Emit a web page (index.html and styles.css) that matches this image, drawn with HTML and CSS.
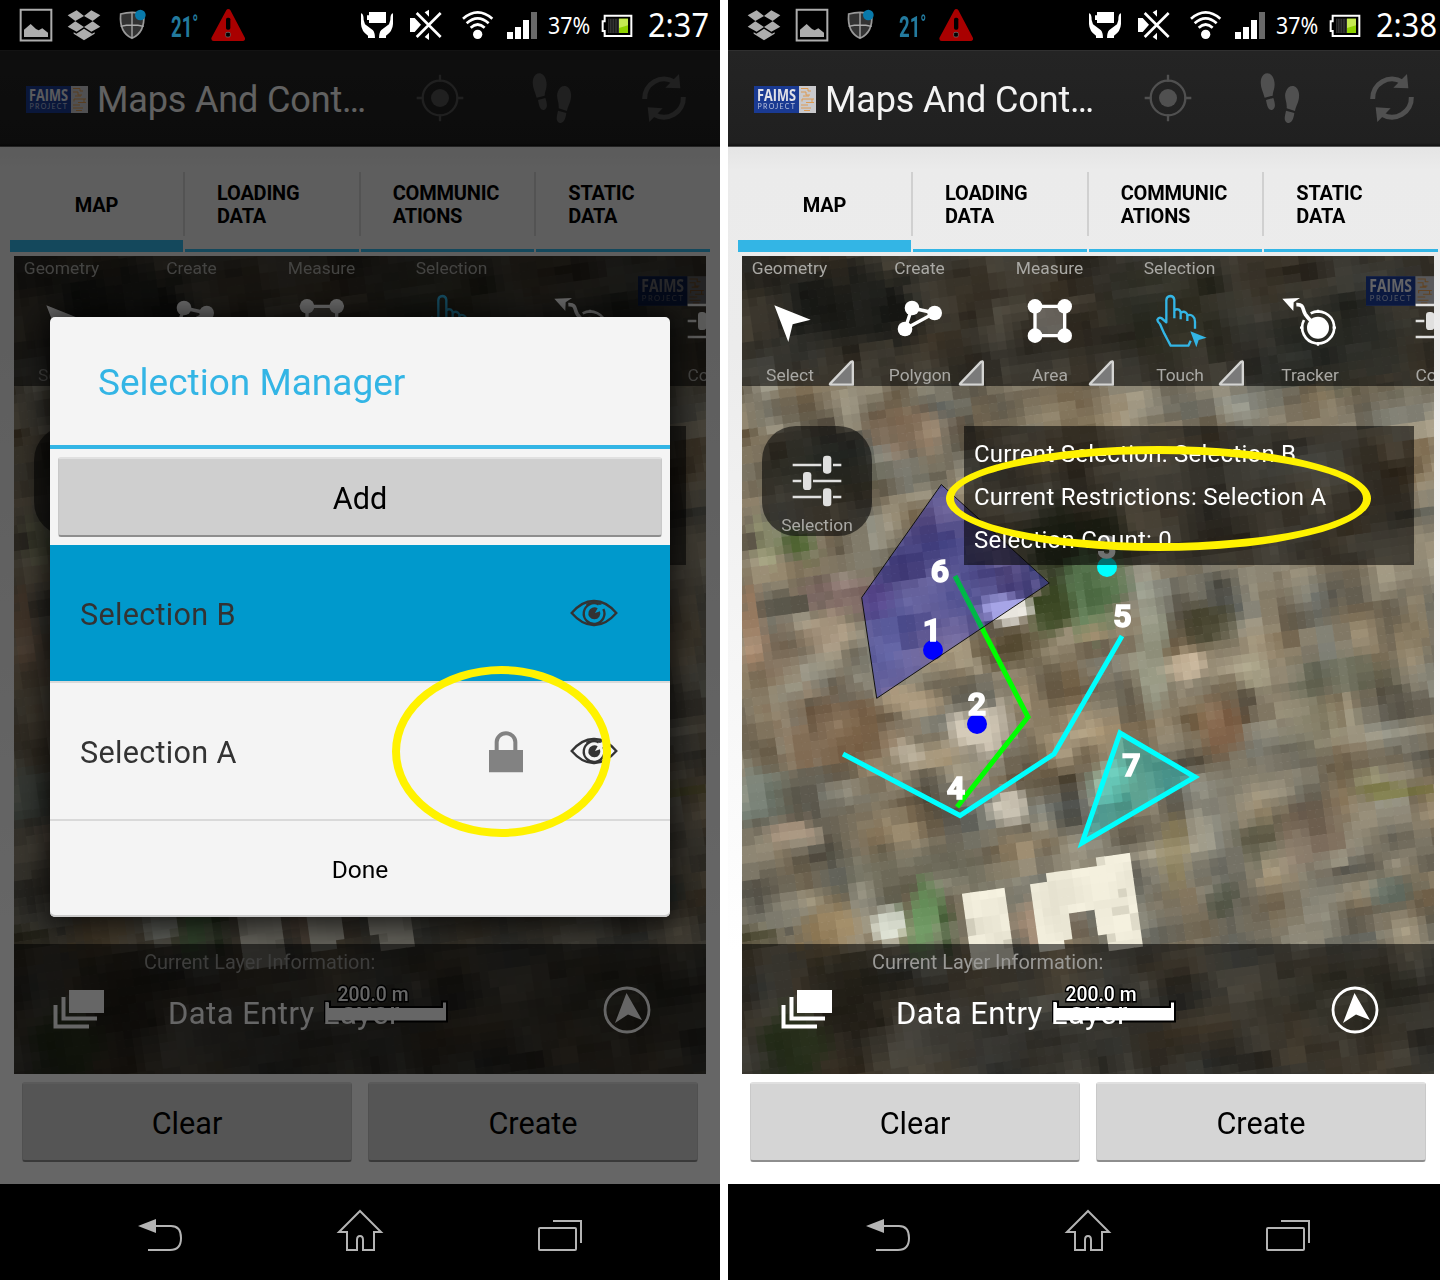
FILE: index.html
```html
<!DOCTYPE html>
<html lang="en">
<head>
<meta charset="utf-8">
<title>Maps And Controls</title>
<link rel="stylesheet" href="styles.css">
</head>
<body>

<svg class="sprite" aria-hidden="true">
  <symbol id="i-image" viewBox="57 24 102 102">
    <path d="M62 29.500H154V121.500H62Z" fill="none" stroke="#adadad" stroke-width="6"/>
    <path d="M72 111V89L92 72 108 87 116 91 127 85 144 98V111Z" fill="#adadad"/>
  </symbol>
  <symbol id="i-dropbox" viewBox="201 24 102 102">
    <path d="M203 46 230 31 252 48 226 63ZM301 46 274 31 252 48 278 63ZM203 80 226 64 252 81 230 95ZM301 80 278 64 252 81 274 95ZM252 86 276 101 284 97V101L252 121 221 101V97L229 101Z" fill="#adadad"/>
  </symbol>
  <symbol id="i-shield" viewBox="351 24 102 102">
    <path d="M362 42Q397 32 431 42Q436 97 396 115Q357 97 362 42Z" fill="#333" stroke="#999" stroke-width="5"/>
    <path d="M396 38V114M362 79Q396 71 431 79" stroke="#aaa" stroke-width="4" fill="none"/>
    <circle cx="421" cy="45" r="16" fill="#0879aa"/>
  </symbol>
  <symbol id="i-warning" viewBox="633 24 102 102">
    <path d="M685 34 728 116H641Z" fill="#a90000" stroke="#a90000" stroke-width="14" stroke-linejoin="round"/>
    <rect x="678" y="53" width="13" height="36" rx="5"/><rect x="677" y="97" width="14" height="14" rx="4" stroke="#777" stroke-width="2"/>
  </symbol>
  <symbol id="i-hands" viewBox="57 24 108 102">
    <path d="M87 36H138V69H87V60H81V46H87Z" fill="#fff"/>
    <path d="M63 40Q71 40 71 60L75 73 98 90Q105 97 105 114H84V107Q64 94 63 72ZM159 40Q151 40 151 60L147 73 124 90Q117 97 117 114H138V107Q158 94 159 72Z" fill="#fff"/>
  </symbol>
  <symbol id="i-mute" viewBox="204 24 108 102">
    <path d="M210 54H224L243 74 224 96H210ZM254 37 267 29V50ZM254 111 267 120V98Z" fill="#fff"/>
    <path d="M230 39 302 111M302 39 230 111" stroke="#fff" stroke-width="8"/>
  </symbol>
  <symbol id="i-wifi" viewBox="363 24 102 102">
    <circle cx="413" cy="103" r="14" fill="#fff"/>
    <path d="M369 56Q413 18 457 56M380 70Q413 40 446 70M392 83Q413 64 434 83" stroke="#fff" stroke-width="8" fill="none"/>
  </symbol>
  <symbol id="i-signal" viewBox="498 24 96 102">
    <path d="M501 96H519V117H501ZM525 81H543V117H525ZM549 60H567V117H549Z" fill="#fff"/><path d="M573 36H591V117H573Z" fill="#696969"/>
  </symbol>
  <symbol id="i-battery" viewBox="783 24 96 102">
    <path d="M794 47H874V108H794V93H788V64H794Z" fill="none" stroke="#fff" stroke-width="6"/>
    <path d="M804 56H837V99H804Z" fill="#333"/><path d="M808 57V98M816 57V98M824 57V98M832 57V98" stroke="#151515" stroke-width="3"/>
    <path d="M837 56H864V99H837Z" fill="#8fd200"/><path d="M837 56H864V76L837 84Z" fill="#c5ea52"/>
  </symbol>
  <symbol id="i-logo" viewBox="0 0 62 27">
    <rect width="62" height="27" fill="#c9c9cc"/>
    <rect width="45" height="27" fill="#1a3a92"/>
    <text x="3" y="14.800" class="logo-name" textLength="39" lengthAdjust="spacingAndGlyphs">FAIMS</text>
    <text x="3.500" y="22.800" class="logo-sub" textLength="37.500">PROJECT</text>
    <path d="M47 2.500H54V5H57M47 6H52V9H56M49 10H55M60 13H48V15.500M60 16.500H52M47 19H54M47 22H57M50 24.500H56M58 13V17" fill="none" stroke="#dc9a52" stroke-width="1"/>
  </symbol>
  <symbol id="i-locate" viewBox="225 219 150 150">
    <circle cx="300" cy="294" r="27" fill="currentColor"/>
    <circle cx="300" cy="294" r="52" fill="none" stroke="currentColor" stroke-width="7"/>
    <path d="M300 224V245M300 343V364M230 294H251M349 294H370" stroke="currentColor" stroke-width="7"/>
  </symbol>
  <symbol id="i-steps" viewBox="561 219 150 150">
    <path d="M590 293C584 272 574 256 580 235C587 213 612 214 618 240C624 262 614 274 614 287ZM594 300 616 294C622 312 624 325 612 330C600 331 597 316 594 300ZM656 325C658 303 646 292 654 274C662 251 690 252 693 282C695 304 684 316 681 333ZM654 332 679 339C677 357 671 370 659 369C645 364 651 347 654 332Z" fill="currentColor"/>
  </symbol>
  <symbol id="i-sync" viewBox="897 219 150 150">
    <path d="M914 297A58 58 0 0 1 1003 246M1030 291A58 58 0 0 1 942 343" fill="none" stroke="currentColor" stroke-width="15"/>
    <path d="M1017 222 1021 265 976 263ZM928 366 923 322 968 325Z" fill="currentColor"/>
  </symbol>
  <symbol id="i-select" viewBox="96 423 180 180">
    <path d="M139 466 248 509 194 523 181 576Z" fill="#fff"/>
  </symbol>
  <symbol id="i-polygon" viewBox="486 423 180 180">
    <path d="M552 474 620 489 531 537Z" fill="none" stroke="#fff" stroke-width="10"/>
    <g fill="#fff"><circle cx="552" cy="474" r="22"/><circle cx="620" cy="489" r="22"/><circle cx="531" cy="537" r="22"/></g>
  </symbol>
  <symbol id="i-area" viewBox="876 423 180 180">
    <path d="M921 469H1010V557H921Z" fill="rgba(255,255,255,.25)" stroke="#fff" stroke-width="10"/>
    <g fill="#fff"><circle cx="921" cy="469" r="22"/><circle cx="1010" cy="469" r="22"/><circle cx="921" cy="557" r="22"/><circle cx="1010" cy="557" r="22"/></g>
  </symbol>
  <symbol id="i-touch" viewBox="210 423 180 180">
    <path d="M283 505V449Q281 438 271 438Q260 439 259 450V517L244 504Q236 501 232 509Q232 514 240 522Q245 534 253 551L263 570 272 587H325L332 572M283 482Q288 475 297 479Q303 483 302 491V508M302 490Q309 482 318 488Q323 492 322 499V513M322 498Q330 491 339 499Q345 504 345 515V536" fill="none" stroke="#33b5e5" stroke-width="7" stroke-linejoin="round"/>
    <path d="M331 544 380 563 356 570 349 592Z" fill="#33b5e5"/>
  </symbol>
  <symbol id="i-tracker" viewBox="600 423 180 180">
    <path d="M607 446 660 444 641 457 640 483Z" fill="#fff"/>
    <path d="M649 464C674 462 666 478 676 493Q683 503 696 516" fill="none" stroke="#fff" stroke-width="11"/>
    <circle cx="714" cy="533" r="33" fill="#fff"/>
    <path d="M692 490A48 48 0 1 1 672 510" fill="none" stroke="#fff" stroke-width="8"/>
    <path d="M714 479V489M714 576V587M660 533H670M758 533H768" stroke="#fff" stroke-width="7"/>
  </symbol>
  <symbol id="i-sliders" viewBox="141 153 180 180">
    <path d="M158 195H244M279 195H304M158 243H184M219 243H304M158 291H244M279 291H304" stroke="#e0e0df" stroke-width="7"/>
    <g fill="#e0e0df"><rect x="249" y="167" width="25" height="54" rx="10"/><rect x="189" y="216" width="25" height="54" rx="10"/><rect x="249" y="265" width="25" height="54" rx="10"/></g>
  </symbol>
  <symbol id="i-corner" viewBox="300 624 80 84">
    <path d="M374 633V701H307Q304 701 306 698L369 632Q374 629 374 634Z" fill="#7a7a7a" stroke="#d4d4d2" stroke-width="7" stroke-linejoin="round"/>
  </symbol>
  <symbol id="i-layers" viewBox="0 0 52 40">
    <path d="M16 1H51V24H16Z" fill="#fff"/><path d="M10.500 8V29.500H44M2.500 16V37.500H36" fill="none" stroke="#fff" stroke-width="4"/>
  </symbol>
  <symbol id="i-compass" viewBox="0 0 48 48">
    <circle cx="24" cy="24" r="22" fill="none" stroke="#fff" stroke-width="2.800"/>
    <path d="M23.500 7 39 34 25 28.500 12 37Z" fill="#fff"/>
  </symbol>
  <symbol id="i-back" viewBox="0 0 48 48">
    <path d="M2 17 20 10V24Z" fill="#b4b4b4"/><path d="M20 17H35Q45 17 45 29Q45 41 34 41H12" fill="none" stroke="#b4b4b4" stroke-width="2"/>
  </symbol>
  <symbol id="i-home" viewBox="0 0 48 48">
    <path d="M24 2 45 23H38V41H27V31Q27 27 24 27Q21 27 21 31V41H11V23H3Z" fill="none" stroke="#b4b4b4" stroke-width="2"/>
  </symbol>
  <symbol id="i-recents" viewBox="0 0 48 48">
    <rect x="3" y="19" width="37" height="22" rx="1" fill="none" stroke="#b4b4b4" stroke-width="2"/><path d="M17 12H45V34" fill="none" stroke="#b4b4b4" stroke-width="2"/>
  </symbol>
  <symbol id="i-eye" viewBox="570 177 144 84">
    <path d="M575 219Q607 182 642 183Q677 182 709 219Q677 256 642 255Q607 256 575 219Z" fill="none" stroke="#333" stroke-width="7"/>
    <path d="M617 191Q642 181 668 191L660 195Q642 185 622 197ZM617 247Q642 259 668 247Q642 251 617 247Z" fill="#333"/>
    <path d="M656 193A31 31 0 1 0 670 207" fill="none" stroke="#333" stroke-width="7"/>
    <path d="M653 205A18 18 0 1 0 660 214L645 219Z" fill="#333"/>
  </symbol>
  <symbol id="i-lock" viewBox="324 567 108 129">
    <path d="M327 627H429V694H327Z" fill="#828282"/><path d="M350 628V603A28 26 0 0 1 406 603V628" fill="none" stroke="#828282" stroke-width="12"/>
  </symbol>
</svg>

<template id="app">
  <header class="action-bar">
    <svg class="app-logo"><use href="#i-logo"/></svg>
    <h1 class="app-title">Maps And Cont…</h1>
    <svg class="action"><use href="#i-locate"/></svg>
    <svg class="action"><use href="#i-steps"/></svg>
    <svg class="action"><use href="#i-sync"/></svg>
  </header>
  <nav class="tabs">
    <div class="tab tab-active"><span>MAP</span></div>
    <div class="tab"><span>LOADING<br>DATA</span></div>
    <div class="tab"><span>COMMUNIC<br>ATIONS</span></div>
    <div class="tab"><span>STATIC<br>DATA</span></div>
  </nav>
  <section class="map">
    <canvas class="imagery" width="692" height="818"></canvas>
    <svg class="shapes" viewBox="742 256 692 818">
      <path d="M955 576 1028 717 957 807" class="line line-green"/>
      <path d="M843 754 960 815.500 1054 754 1122 636" class="line line-cyan"/>
      <path d="M1120 733 1195 777 1082 843Z" class="line line-cyan area"/>
      <circle cx="933" cy="650" r="10" fill="#00f"/><circle cx="977" cy="724" r="10" fill="#00f"/><circle cx="1107" cy="567" r="10" fill="#0ff"/>
      <path d="M941.300 484.500 1049.300 583 876.700 698.300 861.700 597.500Z" class="region"/>
      <g class="marks">
        <text x="940" y="582">6</text><text x="932" y="641">1</text><text x="977" y="715">2</text><text x="1107" y="558">3</text>
        <text x="956" y="799">4</text><text x="1122.500" y="627">5</text><text x="1131.500" y="776">7</text>
      </g>
    </svg>
    <svg class="watermark"><use href="#i-logo"/></svg>
    <div class="toolbar">
      <div class="tool"><span class="group">Geometry</span><svg class="tool-icon"><use href="#i-select"/></svg><span class="name">Select</span><svg class="corner"><use href="#i-corner"/></svg></div>
      <div class="tool"><span class="group">Create</span><svg class="tool-icon"><use href="#i-polygon"/></svg><span class="name">Polygon</span><svg class="corner"><use href="#i-corner"/></svg></div>
      <div class="tool"><span class="group">Measure</span><svg class="tool-icon"><use href="#i-area"/></svg><span class="name">Area</span><svg class="corner"><use href="#i-corner"/></svg></div>
      <div class="tool"><span class="group">Selection</span><svg class="tool-icon"><use href="#i-touch"/></svg><span class="name">Touch</span><svg class="corner"><use href="#i-corner"/></svg></div>
      <div class="tool"><span class="group"></span><svg class="tool-icon"><use href="#i-tracker"/></svg><span class="name">Tracker</span></div>
      <div class="tool"><span class="group"></span><svg class="tool-icon"><use href="#i-sliders"/></svg><span class="name">Config</span></div>
    </div>
    <div class="map-middle">
      <div class="side-button"><svg class="tool-icon"><use href="#i-sliders"/></svg><span>Selection</span></div>
      <div class="info"><p>Current Selection: Selection B</p><p>Current Restrictions: Selection A</p><p>Selection Count: 0</p></div>
    </div>
    <div class="layer-bar">
      <svg class="layers"><use href="#i-layers"/></svg>
      <div class="layer-text"><p class="layer-caption">Current Layer Information:</p><p class="layer-name">Data Entry Layer</p></div>
      <svg class="compass"><use href="#i-compass"/></svg>
    </div>
    <svg class="scale" viewBox="0 0 126 40">
      <path d="M2 17.500H7V23H119V17.500H124V37.500H2Z" fill="#fff" stroke="#000" stroke-width="2"/>
      <text x="50" y="17" textLength="71" lengthAdjust="spacingAndGlyphs">200.0 m</text>
    </svg>
  </section>
  <div class="buttons"><button class="btn">Clear</button><button class="btn">Create</button></div>
</template>

<main class="screens">
  <section class="phone">
    <div class="status">
      <svg class="note"><use href="#i-image"/></svg><svg class="note"><use href="#i-dropbox"/></svg><svg class="note"><use href="#i-shield"/></svg>
      <span class="temp">21<sup>°</sup></span><svg class="note"><use href="#i-warning"/></svg>
      <div class="system">
        <svg class="w36"><use href="#i-hands"/></svg><svg class="w36 mute"><use href="#i-mute"/></svg><svg class="w34"><use href="#i-wifi"/></svg><svg class="w32"><use href="#i-signal"/></svg>
        <span class="percent">37%</span><svg class="w32"><use href="#i-battery"/></svg><span class="clock">2:37</span>
      </div>
    </div>
    <div class="app"></div>
    <div class="scrim">
      <div class="dialog">
        <h2>Selection Manager</h2>
        <div class="add-row"><button class="btn add">Add</button></div>
        <div class="row row-active"><span>Selection B</span><svg class="eye"><use href="#i-eye"/></svg></div>
        <div class="row"><span>Selection A</span><svg class="lock"><use href="#i-lock"/></svg><svg class="eye"><use href="#i-eye"/></svg></div>
        <div class="done">Done</div>
      </div>
    </div>
    <div class="navbar"><svg><use href="#i-back"/></svg><svg><use href="#i-home"/></svg><svg><use href="#i-recents"/></svg></div>
    <div class="ring ring-lock"></div>
  </section>
  <section class="phone">
    <div class="status">
      <svg class="note"><use href="#i-dropbox"/></svg><svg class="note"><use href="#i-image"/></svg><svg class="note"><use href="#i-shield"/></svg>
      <span class="temp">21<sup>°</sup></span><svg class="note"><use href="#i-warning"/></svg>
      <div class="system">
        <svg class="w36"><use href="#i-hands"/></svg><svg class="w36 mute"><use href="#i-mute"/></svg><svg class="w34"><use href="#i-wifi"/></svg><svg class="w32"><use href="#i-signal"/></svg>
        <span class="percent">37%</span><svg class="w32"><use href="#i-battery"/></svg><span class="clock">2:38</span>
      </div>
    </div>
    <div class="app"></div>
    <div class="navbar"><svg><use href="#i-back"/></svg><svg><use href="#i-home"/></svg><svg><use href="#i-recents"/></svg></div>
    <div class="ring ring-info"></div>
  </section>
</main>
<script src="map.js"></script>
</body>
</html>
```
FILE: styles.css
```css
* { box-sizing: border-box; margin: 0; padding: 0; }
body { background: #fff; font-family: Roboto, "Liberation Sans", sans-serif; overflow: hidden; }
svg { display: block; flex: none; }
.sprite { position: absolute; width: 0; height: 0; }
.screens { display: flex; gap: 8px; width: 1448px; height: 1280px; }
.phone { position: relative; width: 720px; height: 1280px; flex: none; overflow: hidden; display: flex; flex-direction: column; }

/* Status bar */
.status { height: 50px; background: #000; display: flex; align-items: center; padding: 0 11px 0 19px; color: #fff; }
.note { width: 34px; height: 34px; margin-right: 14px; }
.note:nth-child(3) { margin: 0 20px 0 2px; }
.temp { width: 40px; color: #237a9e; font: 700 30px/50px Roboto, sans-serif; transform: scaleX(.62); transform-origin: left; white-space: nowrap; padding-top: 3px; }
.temp sup { font-size: 25px; line-height: 0; font-weight: 700; vertical-align: 4px; }
.system { display: flex; align-items: center; margin-left: auto; font-family: "Noto Sans", sans-serif; }
.w36 { width: 36px; height: 34px; }
.mute { margin: 0 17px 0 13px; }
.w34 { width: 34px; height: 34px; margin-right: 11px; }
.w32 { width: 32px; height: 34px; }
.percent { width: 43px; margin: 0 10px; font-size: 24px; line-height: 50px; transform: scaleX(.89); transform-origin: left; white-space: nowrap; }
.clock { width: 61px; margin-left: 15px; font-size: 32px; line-height: 50px; transform: scaleX(.96); transform-origin: left; white-space: nowrap; }

/* Application */
.app { height: 1134px; background: linear-gradient(#e4e4e4 96px, #ebebeb 120px, #ececec 300px, #fff 900px); }
.action-bar { height: 97px; background: linear-gradient(#242424, #202020 92px, #111 95px, #999 96px); border-top: 1px solid #303030; display: flex; align-items: center; padding: 0 31px 0 26px; color: #505050; }
.app-logo { width: 62px; height: 27px; margin-right: 9px; }
.logo-name { font: 700 16.500px "Open Sans", sans-serif; fill: #e2e2e8; }
.logo-sub { font: 400 7px Lato, sans-serif; fill: #b8c0dc; }
.app-title { flex: 1; font-size: 36px; letter-spacing: -.15px; font-weight: 400; color: #f3f3f3; white-space: nowrap; padding-top: 2px; }
.action { width: 50px; height: 50px; margin: 0 0 2px 62px; }
.app-title + .action { margin-left: 0; }
.tabs { height: 105px; padding: 0 10px; display: flex; gap: 2px; font-size: 20px; font-weight: 700; line-height: 23px; color: #000; }
.tab { position: relative; flex: 1; padding: 14px 32px 0; display: flex; align-items: center; border-bottom: 3px solid #33b5e5; }
.tab span { letter-spacing: -.2px; white-space: nowrap; }
.tab + .tab::before { content: ""; position: absolute; left: -2px; top: 25px; width: 2px; height: 64px; background: #d0d0d0; }
.tab-active { flex: 0 0 173px; justify-content: center; border-bottom-width: 12px; padding-top: 23px; }

/* Map */
.map { position: relative; isolation: isolate; margin: 4px 14px 0; height: 818px; overflow: hidden; display: flex; flex-direction: column; }
.imagery, .shapes { position: absolute; left: 0; top: 0; width: 692px; height: 818px; }
.line { fill: none; stroke-width: 5; }
.line-green { stroke: #0f0; }
.line-cyan { stroke: #0ff; }
.line.area { fill: rgba(0, 255, 255, .3); }
.region { fill: rgba(0, 0, 255, .28); stroke: #111; stroke-width: 1; }
.marks { font: 700 32px Roboto, sans-serif; fill: #fff; stroke: #fff; stroke-width: 1.500; text-anchor: middle; }
.watermark { position: absolute; left: 624px; top: 20px; width: 68px; height: 30px; }
.toolbar { position: relative; height: 130px; background: rgba(0, 0, 0, .56); display: flex; }
.tool { position: relative; width: 130px; flex: none; display: flex; flex-direction: column; align-items: center; color: #a9a8a4; font-size: 17.400px; }
.tool:first-child { margin-left: -17px; }
.group { height: 24px; line-height: 25px; padding-right: 1px; }
.tool-icon { width: 60px; height: 60px; margin: 11px 0; }
.name { height: 24px; line-height: 26px; }
.tool:last-child .name { padding-left: 1px; }
.corner { position: absolute; left: 103px; top: 103px; width: 27px; height: 28px; }
.map-middle { position: relative; flex: 1; padding: 40px 20px 0; display: flex; justify-content: space-between; align-items: flex-start; }
.side-button { width: 110px; height: 110px; border-radius: 34px; background: rgba(0, 0, 0, .56); color: #a9a8a4; font-size: 17.400px; line-height: 19px; display: flex; flex-direction: column; align-items: center; padding-top: 25px; }
.side-button .tool-icon { margin: 0 0 5px; }
.info { width: 450px; height: 139px; padding: 7px 10px 3px; background: rgba(0, 0, 0, .56); color: #fff; font-size: 24px; letter-spacing: .25px; line-height: 43px; white-space: nowrap; }
.layer-bar { position: relative; height: 130px; background: rgba(0, 0, 0, .56); display: flex; padding: 0 55px 0 39px; color: #fff; }
.layers { width: 52px; height: 40px; margin-top: 45px; }
.layer-text { position: relative; z-index: 1; flex: 1; padding-left: 39px; white-space: nowrap; }
.layer-caption { font-size: 19.900px; line-height: 24px; padding-top: 7px; color: #9a9996; }
.layer-name { font-size: 31px; letter-spacing: .45px; line-height: 40px; padding: 19px 0 0 24px; }
.compass { width: 48px; height: 48px; margin-top: 42px; }
.scale { position: absolute; left: 309px; top: 728px; width: 126px; height: 40px; }
.scale text { font-size: 20px; font-weight: 500; fill: #fff; stroke: #000; stroke-width: 3; paint-order: stroke; text-anchor: middle; }

.buttons { display: flex; gap: 16px; padding: 8px 22px 0; }
.btn { flex: 1; height: 80px; border: 1px solid #c9c9c9; border-top: 2px solid #e0e0e0; border-bottom: 2px solid #8e8e8e; border-radius: 3px; background: #d5d5d5; font: 400 30.600px Roboto, sans-serif; color: #000; padding-top: 3px; }

/* Dialog */
.scrim { position: absolute; left: 0; top: 50px; width: 720px; height: 1134px; background: rgba(0, 0, 0, .6); display: flex; justify-content: center; align-items: flex-start; padding-top: 267px; }
.dialog { width: 620px; height: 600px; border-radius: 5px; overflow: hidden; background: #f4f4f4; box-shadow: 0 4px 26px 5px rgba(0, 0, 0, .7), inset 0 -2px #ccc; }
.dialog h2 { height: 132px; padding-left: 48px; font-size: 37px; font-weight: 400; line-height: 131px; color: #33b5e5; border-bottom: 4px solid #33b5e5; }
.add-row { height: 96px; padding: 8px; display: flex; }
.btn.add { background: #cfcfcf; }
.row { height: 138px; padding: 0 52px 0 30px; display: flex; align-items: center; font-size: 30.600px; letter-spacing: .3px; color: #333; border-bottom: 2px solid #d9d9d9; }
.row span { flex: 1; padding-top: 3px; }
.row-active { background: #09c; background-clip: padding-box; }
.eye { width: 48px; height: 28px; }
.lock { width: 36px; height: 43px; margin-right: 46px; }
.done { text-align: center; font-size: 24.500px; line-height: 98px; color: #000; }

.navbar { height: 96px; background: #000; display: flex; justify-content: space-between; padding: 25px 136px 0; }
.navbar svg { width: 48px; height: 48px; }

/* Highlight rings over the screens */
.ring { position: absolute; border: 8px solid #fff200; border-radius: 50%; }
.ring-lock { left: 392px; top: 666px; width: 219px; height: 171px; }
.ring-info { left: 218px; top: 446px; width: 425px; height: 105px; }
```
FILE: map.js
```js
const CELL = 8.6;
const TILT = -8 * Math.PI / 180;

/* Ground features: x, y, radius x, radius y, colour, strength */
const FEATURES = [
  [110, 55, 70, 45, [45, 48, 42], .8], [430, 60, 60, 50, [90, 95, 68], .5], [600, 90, 80, 50, [75, 80, 70], .7],
  [58, 290, 22, 16, [75, 98, 45], .9], [25, 285, 14, 26, [155, 158, 120], .7],
  [330, 295, 55, 45, [45, 52, 30], .9], [355, 335, 30, 40, [92, 125, 84], .9], [305, 355, 22, 25, [48, 62, 25], .9],
  [265, 354, 28, 14, [240, 237, 230], 1], [275, 395, 34, 20, [85, 74, 50], .8], [110, 340, 45, 20, [150, 115, 120], .5],
  [85, 375, 28, 20, [182, 162, 138], .6], [35, 400, 35, 30, [120, 100, 80], .6],
  [95, 475, 65, 45, [125, 96, 68], .7], [10, 370, 14, 40, [170, 132, 102], .7],
  [235, 475, 34, 28, [216, 206, 188], .95], [265, 550, 22, 17, [220, 212, 195], .9], [170, 445, 35, 14, [172, 152, 122], .8],
  [165, 498, 16, 12, [182, 172, 152], .8], [20, 540, 32, 28, [118, 130, 120], .8], [50, 576, 28, 13, [176, 154, 132], .8],
  [80, 215, 50, 25, [110, 117, 98], .5], [170, 175, 40, 25, [155, 120, 92], .5], [330, 170, 60, 20, [158, 146, 120], .6],
  [410, 390, 18, 62, [156, 160, 140], .8], [465, 372, 26, 24, [72, 69, 48], .95], [445, 408, 20, 16, [220, 200, 172], .7],
  [365, 525, 20, 20, [165, 210, 185], .7], [480, 470, 26, 26, [124, 92, 66], .9], [515, 420, 20, 18, [176, 170, 142], .7],
  [575, 465, 35, 30, [158, 155, 130], .6], [655, 535, 36, 9, [116, 114, 58], .8], [625, 520, 18, 7, [158, 154, 115], .7],
  [520, 580, 26, 26, [84, 84, 64], .6], [430, 600, 16, 35, [135, 122, 82], .7], [480, 645, 14, 18, [78, 82, 66], .8],
  [650, 635, 26, 18, [90, 106, 98], .7], [570, 580, 35, 35, [118, 96, 78], .6], [670, 380, 18, 40, [168, 150, 118], .6],
  [600, 420, 50, 24, [96, 100, 82], .7], [170, 620, 80, 30, [98, 98, 82], .6], [85, 675, 32, 34, [145, 120, 80], .8],
  [10, 680, 28, 12, [62, 60, 38], .9], [182, 668, 22, 38, [104, 145, 92], 1], [205, 680, 10, 28, [74, 96, 60], .8],
  [148, 670, 15, 18, [210, 214, 200], 1], [300, 670, 35, 22, [165, 138, 114], .8], [50, 790, 35, 35, [78, 98, 52], .9],
  [110, 730, 40, 40, [75, 70, 54], .6], [220, 775, 75, 36, [145, 142, 132], .6], [600, 740, 70, 30, [90, 90, 72], .6]
];

/* Bright roofs as quads in map coordinates */
const ROOFS = [
  [[220, 634], [259, 630], [270, 712], [227, 715]],
  [[290, 626], [388, 595], [403, 688], [365, 694], [350, 652], [290, 655]],
  [[288, 640], [322, 640], [328, 700], [296, 690]]
];

function hash(i, j, k) {
  let h = Math.imul(i + 1013, 374761393) ^ Math.imul(j + 787, 668265263) ^ Math.imul(k + 11, 1274126177);
  h = Math.imul(h ^ (h >>> 13), 1103515245);
  h = Math.imul(h ^ (h >>> 15), 2246822519);
  return ((h ^ (h >>> 16)) >>> 0) / 4294967296;
}

function smooth(x, y, k) {
  const i = Math.floor(x), j = Math.floor(y);
  const u = x - i, v = y - j;
  const top = hash(i, j, k) * (1 - u) + hash(i + 1, j, k) * u;
  const low = hash(i, j + 1, k) * (1 - u) + hash(i + 1, j + 1, k) * u;
  return top * (1 - v) + low * v - .5;
}

function inside(poly, x, y) {
  let hit = false;
  for (let a = 0, b = poly.length - 1; a < poly.length; b = a++) {
    const [ax, ay] = poly[a], [bx, by] = poly[b];
    if ((ay > y) !== (by > y) && x < (bx - ax) * (y - ay) / (by - ay) + ax) hit = !hit;
  }
  return hit;
}

function ground(i, j, x, y) {
  /* Neighbouring samples often repeat, which gives uneven block sizes */
  const p = i - (hash(i >> 1, j >> 2, 7) < .35 ? i & 1 : 0);
  const q = j - (hash(i >> 2, j >> 1, 8) < .3 ? j & 1 : 0);
  const light = smooth(p / 3.1, q / 2.5, 1) * 82 + smooth(p / 7, q / 5, 2) * 30 + (hash(p, q, 3) - .5) * 11;
  const warm = smooth(p / 5, q / 4, 4) * 38 + smooth(p / 3, q / 3, 5) * 14;
  let c = [127 + light + warm * .5, 119 + light, 101 + light * .92 - warm * .5];
  for (const [fx, fy, rx, ry, tone, power] of FEATURES) {
    const d = Math.hypot((x - fx) / rx, (y - fy) / ry) + smooth(p / 2, q / 2, 9) * .6;
    if (d < 1.25) {
      const a = power * Math.min(1, (1.25 - d) * 1.5);
      c = c.map((v, n) => v * (1 - a) + (tone[n] + light * .45) * a);
    }
  }
  if (ROOFS.some(poly => inside(poly, x, y))) {
    const shade = hash(p, q, 12) < .12 ? -22 : 0;
    c = [240, 236, 218].map(v => v + light * .3 + shade);
  }
  return `rgb(${c.map(v => Math.max(0, Math.min(255, Math.round(v)))).join()})`;
}

function paint(canvas) {
  const g = canvas.getContext('2d');
  const cos = Math.cos(TILT), sin = Math.sin(TILT);
  g.rotate(TILT);
  for (let j = -2; j < 112; j++) {
    for (let i = -16; i < 84; i++) {
      const u = i * CELL, v = j * CELL;
      const x = (u + CELL / 2) * cos - (v + CELL / 2) * sin;
      const y = (u + CELL / 2) * sin + (v + CELL / 2) * cos;
      if (x < -12 || y < -12 || x > 704 || y > 830) continue;
      g.fillStyle = ground(i, j, x, y);
      g.fillRect(u, v, CELL + .6, CELL + .6);
    }
  }
}

const template = document.getElementById('app');
document.querySelectorAll('.app').forEach(app => {
  app.append(template.content.cloneNode(true));
  paint(app.querySelector('.imagery'));
});
```
